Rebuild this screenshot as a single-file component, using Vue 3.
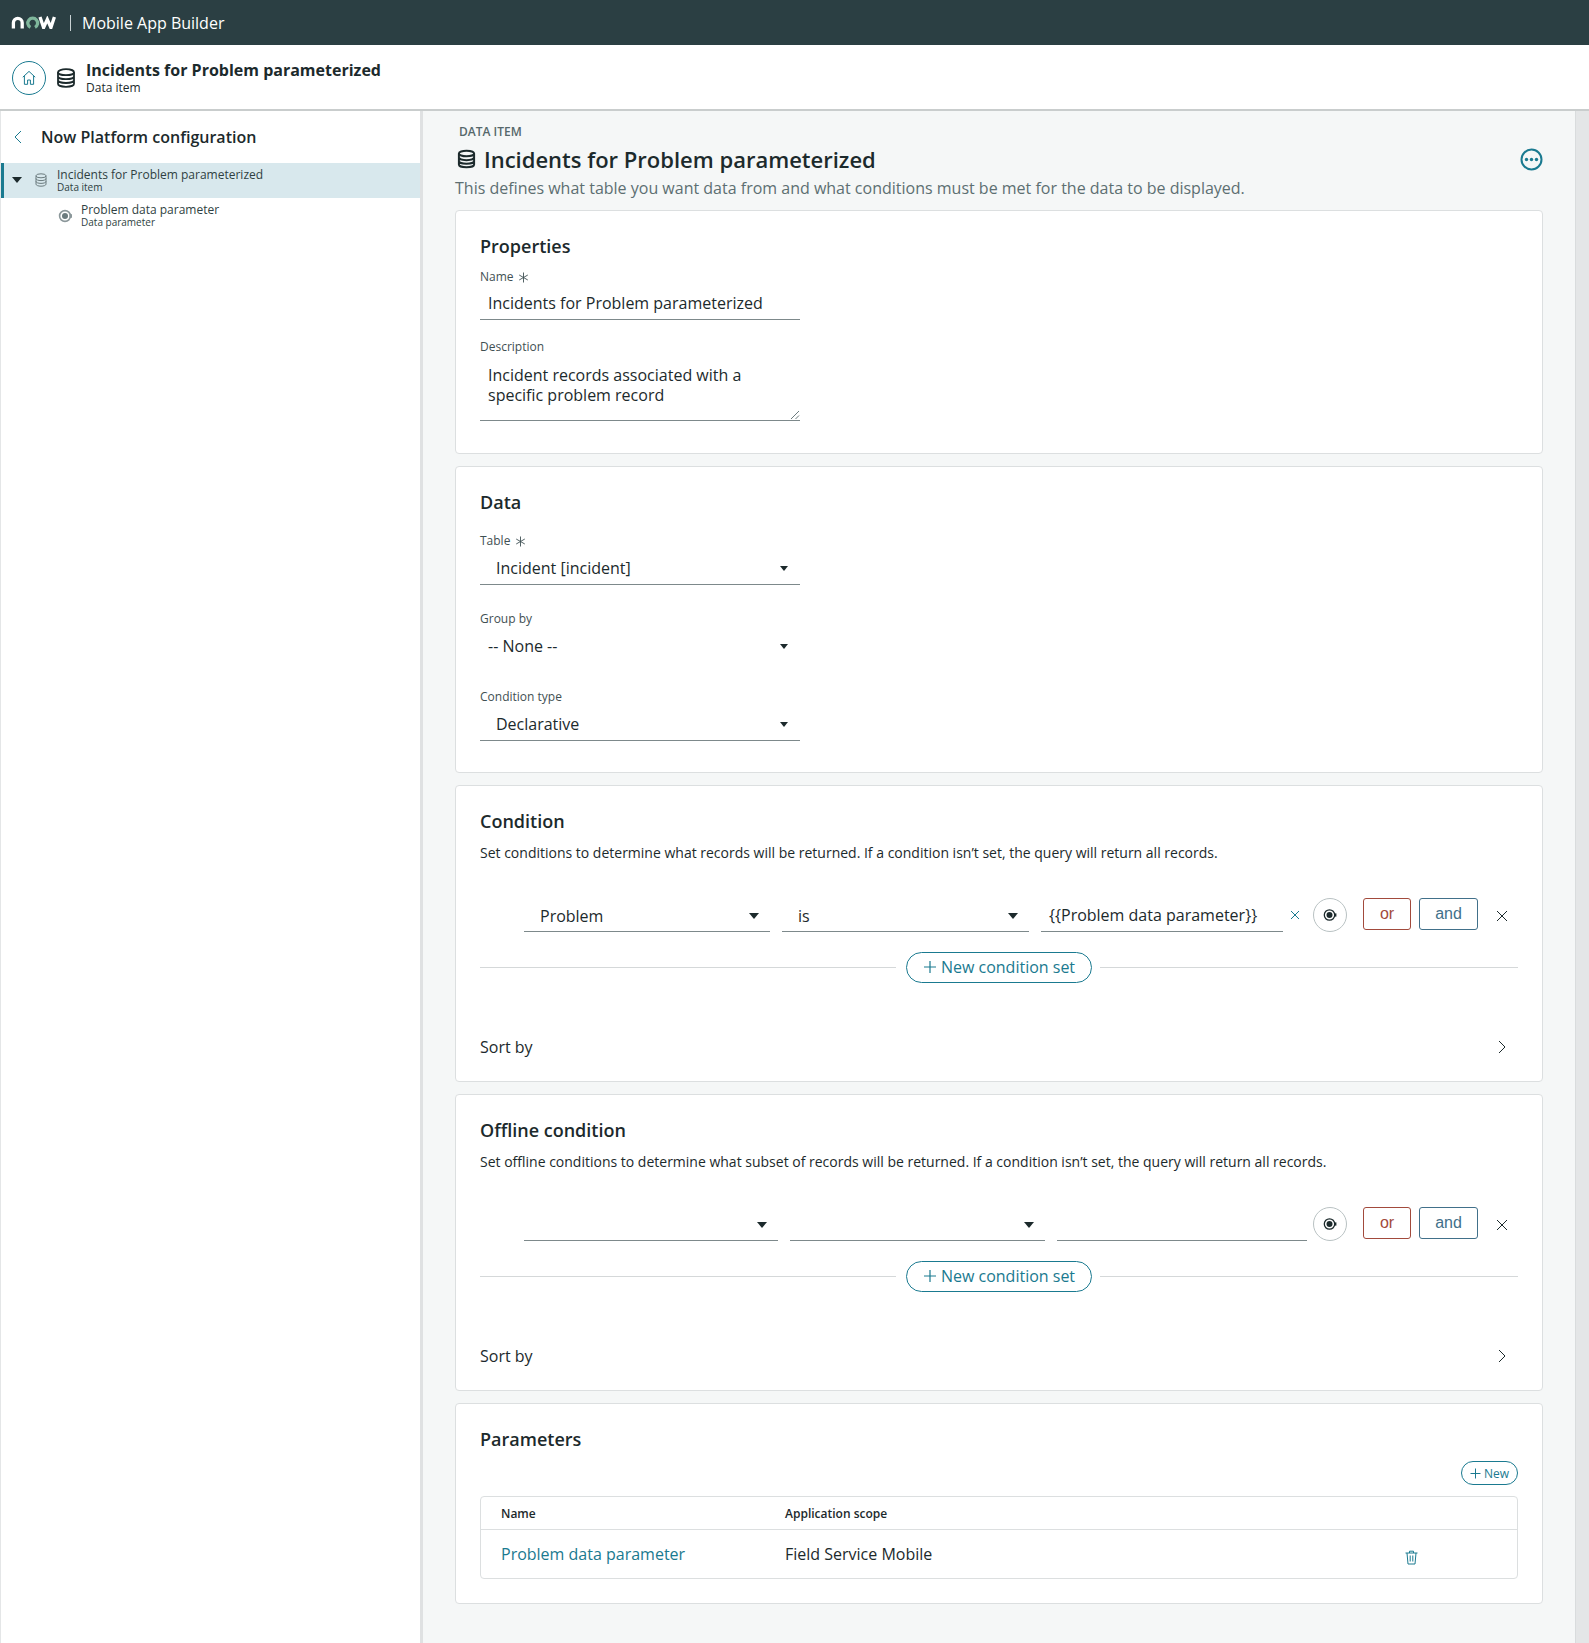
<script setup>
const conditionCards = [
  {
    title: 'Condition',
    text: 'Set conditions to determine what records will be returned. If a condition isn’t set, the query will return all records.',
    offline: false,
    field: 'Problem',
    operator: 'is',
    value: '{{Problem data parameter}}'
  },
  {
    title: 'Offline condition',
    text: 'Set offline conditions to determine what subset of records will be returned. If a condition isn’t set, the query will return all records.',
    offline: true,
    field: '',
    operator: '',
    value: ''
  }
]
</script>

<template>
  <div class="page">
    <header class="topbar">
      <svg class="logo" width="46" height="13" viewBox="0 0 46 13" fill="none" stroke-width="3.3">
        <path d="M2.400 12.500V6.800a4.400 4.400 0 0 1 8.800 0v5.700" stroke="#fff" />
        <path d="M19.400 11.400a4.900 4.900 0 1 1 4.600 0" stroke="#7fb79c" />
        <path d="M29 1l3.600 10.600L36.300 3.400l3.600 8.200L43.400 1" stroke="#fff" />
      </svg>
      <span class="topbar-sep"></span>
      <span class="topbar-title">Mobile App Builder</span>
    </header>

    <div class="subheader">
      <span class="home">
        <svg width="16" height="16" viewBox="0 0 16 16" fill="none" stroke="#1a7a90" stroke-width="1">
          <path d="M1.800 7.200L8 1.400l6.200 5.800M3.400 5.900v8.400h3.200V10h2.800v4.300h3.200V5.900" />
        </svg>
      </span>
      <svg class="db-big" width="20" height="20" viewBox="0 0 20 20" fill="none" stroke="#1c2a2c" stroke-width="1.8">
        <ellipse cx="10" cy="4.200" rx="8" ry="3" />
        <path d="M2 4.200v11.600c0 1.700 3.600 3 8 3s8-1.300 8-3V4.200M2 8.200c0 1.700 3.600 3 8 3s8-1.300 8-3M2 12c0 1.700 3.600 3 8 3s8-1.300 8-3" />
      </svg>
      <div>
        <div class="subheader-title">Incidents for Problem parameterized</div>
        <div class="subheader-sub">Data item</div>
      </div>
    </div>

    <div class="body">
      <aside class="sidebar">
        <div class="side-head">
          <svg width="10" height="14" viewBox="0 0 10 14" fill="none" stroke="#1a7a90" stroke-width="1">
            <path d="M8 1L2 7l6 6" />
          </svg>
          <span>Now Platform configuration</span>
        </div>
        <div class="tree-row selected">
          <span class="caret"></span>
          <svg width="12" height="14" viewBox="0 0 12 14" fill="none" stroke="#6b7b7e" stroke-width="1">
            <ellipse cx="6" cy="2.800" rx="5" ry="2" />
            <path d="M1 2.800v8.400c0 1.100 2.200 2 5 2s5-.9 5-2V2.800M1 5.600c0 1.100 2.200 2 5 2s5-.9 5-2M1 8.400c0 1.100 2.200 2 5 2s5-.9 5-2" />
          </svg>
          <div class="tree-text">
            <div class="tree-name">Incidents for Problem parameterized</div>
            <div class="tree-sub">Data item</div>
          </div>
        </div>
        <div class="tree-row child">
          <svg class="param-icon" width="15" height="14" viewBox="0 0 15 14" fill="none">
            <circle cx="7" cy="7" r="5.400" stroke="#8b979a" stroke-width="1.600" />
            <circle cx="7" cy="7" r="3" fill="#6b7b7e" />
            <rect x="11.500" y="5.200" width="2.500" height="3.600" fill="#8b979a" />
          </svg>
          <div class="tree-text">
            <div class="tree-name">Problem data parameter</div>
            <div class="tree-sub">Data parameter</div>
          </div>
        </div>
      </aside>

      <main class="main">
        <div class="eyebrow">DATA ITEM</div>
        <div class="title-row">
          <svg width="19" height="20" viewBox="0 0 20 20" fill="none" stroke="#1c2a2c" stroke-width="2.100">
            <ellipse cx="10" cy="4.200" rx="8" ry="3" />
            <path d="M2 4.200v11.600c0 1.700 3.600 3 8 3s8-1.300 8-3V4.200M2 8.200c0 1.700 3.600 3 8 3s8-1.300 8-3M2 12c0 1.700 3.600 3 8 3s8-1.300 8-3" />
          </svg>
          <h1>Incidents for Problem parameterized</h1>
          <svg class="more" width="23" height="23" viewBox="0 0 23 23" fill="none">
            <circle cx="11.500" cy="11.500" r="10" stroke="#1a7a90" stroke-width="2" />
            <circle cx="6.500" cy="11.500" r="1.700" fill="#1a7a90" />
            <circle cx="11.500" cy="11.500" r="1.700" fill="#1a7a90" />
            <circle cx="16.500" cy="11.500" r="1.700" fill="#1a7a90" />
          </svg>
        </div>
        <p class="lead">This defines what table you want data from and what conditions must be met for the data to be displayed.</p>

        <section class="card card-properties">
          <h2>Properties</h2>
          <label class="label first">Name
            <svg class="req" width="11" height="11" viewBox="0 0 11 11" stroke="#3f5053" stroke-width=".9">
              <path d="M5.500 .5v10M1.200 3l8.600 5M9.800 3L1.200 8" />
            </svg>
          </label>
          <div class="input tight">Incidents for Problem parameterized</div>
          <label class="label">Description</label>
          <div class="textarea">
            Incident records associated with a<br />specific problem record
            <svg class="grip" width="10" height="10" viewBox="0 0 10 10" stroke="#6b7b7e" stroke-width="1">
              <path d="M1 9l8-8M5.500 9L9 5.500" />
            </svg>
          </div>
        </section>

        <section class="card card-data">
          <h2>Data</h2>
          <label class="label second">Table
            <svg class="req" width="11" height="11" viewBox="0 0 11 11" stroke="#3f5053" stroke-width=".9">
              <path d="M5.500 .5v10M1.200 3l8.600 5M9.800 3L1.200 8" />
            </svg>
          </label>
          <div class="select indented">Incident [incident]<span class="arrow"></span></div>
          <label class="label spaced">Group by</label>
          <div class="select plain">-- None --<span class="arrow"></span></div>
          <label class="label spaced">Condition type</label>
          <div class="select indented">Declarative<span class="arrow"></span></div>
        </section>

        <section v-for="c in conditionCards" :key="c.title" class="card card-condition">
          <h2>{{ c.title }}</h2>
          <p class="hint">{{ c.text }}</p>
          <div class="cond-row" :class="{ offline: c.offline }">
            <div class="select cond-field">{{ c.field }}<span class="arrow big"></span></div>
            <div class="select cond-op">{{ c.operator }}<span class="arrow big"></span></div>
            <div class="input cond-value">
              {{ c.value }}
            </div>
            <svg v-if="!c.offline" class="clear" width="10" height="10" viewBox="0 0 10 10" stroke="#1a7a90" stroke-width="1">
              <path d="M1 1l8 8M9 1l-8 8" />
            </svg>
            <span class="picker">
              <svg width="14" height="14" viewBox="0 0 14 14" fill="none">
                <circle cx="6.500" cy="7" r="5.200" stroke="#1c2a2c" stroke-width="1.300" />
                <circle cx="6.500" cy="7" r="3" fill="#1c2a2c" />
                <rect x="11" y="5.400" width="2.400" height="3.200" fill="#1c2a2c" />
              </svg>
            </span>
            <button class="btn-or">or</button>
            <button class="btn-and">and</button>
            <svg class="remove" width="12" height="12" viewBox="0 0 12 12" stroke="#1c2a2c" stroke-width="1">
              <path d="M1 1l10 10M11 1L1 11" />
            </svg>
          </div>
          <div class="divider">
            <button class="pill">
              <svg width="14" height="14" viewBox="0 0 14 14" stroke="#1a7a90" stroke-width="1.200">
                <path d="M7 1v12M1 7h12" />
              </svg>
              New condition set
            </button>
          </div>
          <div class="sort">
            <span>Sort by</span>
            <svg width="10" height="14" viewBox="0 0 10 14" fill="none" stroke="#1c2a2c" stroke-width="1">
              <path d="M2 1l6 6-6 6" />
            </svg>
          </div>
        </section>

        <section class="card card-params">
          <h2>Parameters</h2>
          <div class="params-actions">
            <button class="pill small">
              <svg width="11" height="11" viewBox="0 0 11 11" stroke="#1a7a90" stroke-width="1">
                <path d="M5.500 .5v10M.5 5.500h10" />
              </svg>
              New
            </button>
          </div>
          <table class="params">
            <thead>
              <tr>
                <th class="col-name">Name</th>
                <th>Application scope</th>
                <th class="col-del"></th>
              </tr>
            </thead>
            <tbody>
              <tr>
                <td><a>Problem data parameter</a></td>
                <td>Field Service Mobile</td>
                <td class="col-del">
                  <svg width="13" height="15" viewBox="0 0 13 15" fill="none" stroke="#1a7a90" stroke-width="1">
                    <path d="M.5 3h12M4.500 3V1.200h4V3M2 3l1 11h7l1-11M5.200 5.500v6M7.800 5.500v6" />
                  </svg>
                </td>
              </tr>
            </tbody>
          </table>
        </section>
      </main>
      <div class="track"></div>
    </div>
  </div>
</template>

<style>
html,
body {
  margin: 0;
  background: #fff;
}
</style>

<style scoped>
.page {
  height: 1643px;
  display: flex;
  flex-direction: column;
  overflow: hidden;
  font-family: "Open Sans", "Noto Sans", sans-serif;
  color: #1c2a2c;
}

.topbar {
  height: 45px;
  flex: none;
  background: #2b3f43;
  display: flex;
  align-items: center;
  padding-left: 11px;
  color: #fff;
}

.topbar-sep {
  width: 1px;
  height: 16px;
  background: #c9d2d3;
  margin: 0 11px 0 13px;
}

.topbar-title {
  font-size: 16px;
}

.subheader {
  height: 66px;
  flex: none;
  box-sizing: border-box;
  border-bottom: 2px solid #c9cdcd;
  display: flex;
  align-items: center;
  padding: 2px 0 0 12px;
}

.home {
  width: 34px;
  height: 34px;
  box-sizing: border-box;
  border: 1.500px solid #1a7a90;
  border-radius: 50%;
  display: flex;
  align-items: center;
  justify-content: center;
}

.db-big {
  margin: 0 10px 0 10px;
}

.subheader-title {
  font-size: 16px;
  line-height: 20px;
  font-weight: 700;
}

.subheader-sub {
  font-size: 12px;
  line-height: 16px;
}

.body {
  flex: 1;
  display: flex;
  min-height: 0;
}

.sidebar {
  width: 423px;
  flex: none;
  box-sizing: border-box;
  border-right: 3px solid #dfe1e2;
  border-left: 1px solid #e4e6e7;
}

.side-head {
  height: 52px;
  display: flex;
  align-items: center;
  gap: 18px;
  padding-left: 12px;
  font-size: 16px;
  font-weight: 600;
}

.tree-row {
  height: 35px;
  display: flex;
  align-items: center;
  box-sizing: border-box;
  padding-bottom: 1px;
}

.tree-row.selected {
  background: #d8e8ed;
  border-left: 3px solid #1a7a90;
  padding-left: 8px;
}

.caret {
  width: 0;
  height: 0;
  border-left: 5.500px solid transparent;
  border-right: 5.500px solid transparent;
  border-top: 6px solid #1c2a2c;
  margin-right: 13px;
}

.tree-row.child {
  padding-left: 56px;
}

.param-icon {
  margin: 2px 0 0 1px;
}

.tree-text {
  margin-left: 10px;
}

.tree-row.child .tree-text {
  margin-left: 8px;
}

.tree-name {
  font-size: 12px;
  line-height: 14px;
  color: #2f3f42;
}

.tree-sub {
  font-size: 10px;
  line-height: 10px;
  color: #2f3f42;
}

.main {
  flex: 1;
  background: #f5f7f7;
  box-sizing: border-box;
  padding: 12px 32px 0;
  min-width: 0;
}

.eyebrow {
  font-size: 12px;
  line-height: 18px;
  font-weight: 600;
  color: #56686b;
  padding-left: 4px;
}

.title-row {
  display: flex;
  align-items: center;
  height: 30px;
  margin: 3px 0 1px;
  padding-left: 2px;
}

.title-row h1 {
  margin: 0 0 0 8px;
  font-size: 22px;
  line-height: 30px;
  font-weight: 600;
}

.more {
  margin-left: auto;
}

.lead {
  margin: 3px 0 0;
  font-size: 16px;
  line-height: 22px;
  color: #5d6f72;
}

.card {
  background: #fff;
  border: 1px solid #dcdfe0;
  border-radius: 4px;
  box-sizing: border-box;
  padding: 23px 24px;
  margin-top: 12px;
}

.card-properties {
  margin-top: 11px;
  padding-bottom: 32px;
}

.card-data {
  padding-bottom: 31px;
}

.card-condition {
  padding-bottom: 22px;
}

.card-params {
  padding-bottom: 24px;
}

h2 {
  margin: 0;
  font-size: 18px;
  line-height: 24px;
  font-weight: 600;
}

.label {
  display: block;
  font-size: 12px;
  line-height: 18px;
  color: #3f5053;
  margin-top: 18px;
}

.label.first {
  margin-top: 10px;
}

.label.second {
  margin-top: 18px;
}

.label.spaced {
  margin-top: 25px;
}

.req {
  vertical-align: -2px;
  margin-left: 1px;
}

.input,
.select,
.textarea {
  position: relative;
  width: 320px;
  margin-top: 2px;
  box-sizing: border-box;
  font-size: 16px;
  line-height: 32px;
  height: 33px;
  padding-left: 8px;
  border-bottom: 1px solid #7d898b;
}

.input.tight {
  margin-top: 1px;
}

.textarea {
  height: 63px;
  line-height: 20px;
  padding-top: 7px;
}

.grip {
  position: absolute;
  right: 0;
  bottom: 0;
}

.select.indented {
  padding-left: 16px;
}

.select.plain {
  border-bottom-color: transparent;
}

.arrow {
  position: absolute;
  right: 12px;
  top: 14px;
  width: 0;
  height: 0;
  border-left: 4.500px solid transparent;
  border-right: 4.500px solid transparent;
  border-top: 5px solid #1c2a2c;
}

.arrow.big {
  border-left-width: 5.500px;
  border-right-width: 5.500px;
  border-top-width: 6px;
}

.hint {
  margin: 10px 0 0;
  font-size: 14px;
  line-height: 20px;
}

.cond-row {
  display: flex;
  align-items: flex-start;
  margin-top: 36px;
  padding-left: 44px;
  height: 34px;
  position: relative;
}

.cond-row .select,
.cond-row .input {
  margin-top: 0;
}

.cond-row .select {
  line-height: 34px;
}

.cond-field {
  width: 246px;
  padding-left: 16px;
}

.cond-op {
  width: 247px;
  margin-left: 12px;
  padding-left: 16px;
}

.cond-value {
  width: 242px;
  margin-left: 12px;
}

.offline .cond-field {
  width: 254px;
}

.offline .cond-op {
  width: 255px;
}

.offline .cond-value {
  width: 250px;
  margin-right: 6px;
}

.cond-row .arrow {
  right: 11px;
}

.clear {
  margin: 11px 0 0 7px;
  flex: none;
}

.picker {
  width: 34px;
  height: 34px;
  box-sizing: border-box;
  border: 1px solid #b9c2c3;
  border-radius: 50%;
  margin: -1px 0 0 13px;
  display: flex;
  align-items: center;
  justify-content: center;
  flex: none;
}

.offline .picker {
  margin-left: 0;
}

.btn-or,
.btn-and {
  font-family: "Liberation Sans", Arial, sans-serif;
  font-size: 16px;
  height: 32px;
  margin: -1px 0 0;
  padding: 0;
  background: #fff;
  border-radius: 3px;
  flex: none;
}

.btn-or {
  width: 48px;
  margin-left: 16px;
  color: #a24a3c;
  border: 1px solid #a24a3c;
}

.btn-and {
  width: 59px;
  margin-left: 8px;
  color: #41708a;
  border: 1px solid #41708a;
}

.remove {
  margin: 11px 0 0 18px;
  flex: none;
}

.divider {
  display: flex;
  align-items: center;
  gap: 8px;
  margin-top: 19px;
}

.divider::before,
.divider::after {
  content: "";
  height: 1px;
  background: #d5d8d9;
}

.divider::before {
  width: 416px;
  flex: none;
}

.divider::after {
  flex: 1;
}

.pill {
  display: inline-flex;
  align-items: center;
  justify-content: center;
  gap: 4px;
  height: 31px;
  width: 186px;
  padding: 0 0 2px;
  box-sizing: border-box;
  background: #fff;
  border: 1px solid #1a7a90;
  border-radius: 16px;
  color: #1a7a90;
  font-family: inherit;
  font-size: 16px;
}

.divider .pill {
  margin-left: 2px;
}

.pill.small {
  width: 57px;
  height: 24px;
  font-size: 12px;
  gap: 3px;
  padding: 0;
}

.sort {
  margin-top: 52px;
  display: flex;
  justify-content: space-between;
  align-items: center;
  font-size: 16px;
  line-height: 24px;
  padding-right: 11px;
}

.params-actions {
  display: flex;
  justify-content: flex-end;
  margin-top: 10px;
}

.params {
  width: 100%;
  margin-top: 11px;
  border: 1px solid #dcdfe0;
  border-radius: 4px;
  border-spacing: 0;
  table-layout: fixed;
}

.params th {
  height: 32px;
  padding: 0;
  font-size: 12px;
  font-weight: 600;
  text-align: left;
  border-bottom: 1px solid #dcdfe0;
}

.params td {
  height: 48px;
  padding: 0;
  font-size: 16px;
}

.params th:first-child,
.params td:first-child {
  padding-left: 20px;
}

.col-name {
  width: 284px;
}

.col-del {
  width: 112px;
}

.params td.col-del svg {
  display: block;
  margin: 7px 0 0 0;
}

.params a {
  color: #1a7a90;
}

.track {
  width: 14px;
  flex: none;
  background: #e4e6e7;
  border-left: 1px solid #d9dcdd;
  box-sizing: border-box;
}
</style>
